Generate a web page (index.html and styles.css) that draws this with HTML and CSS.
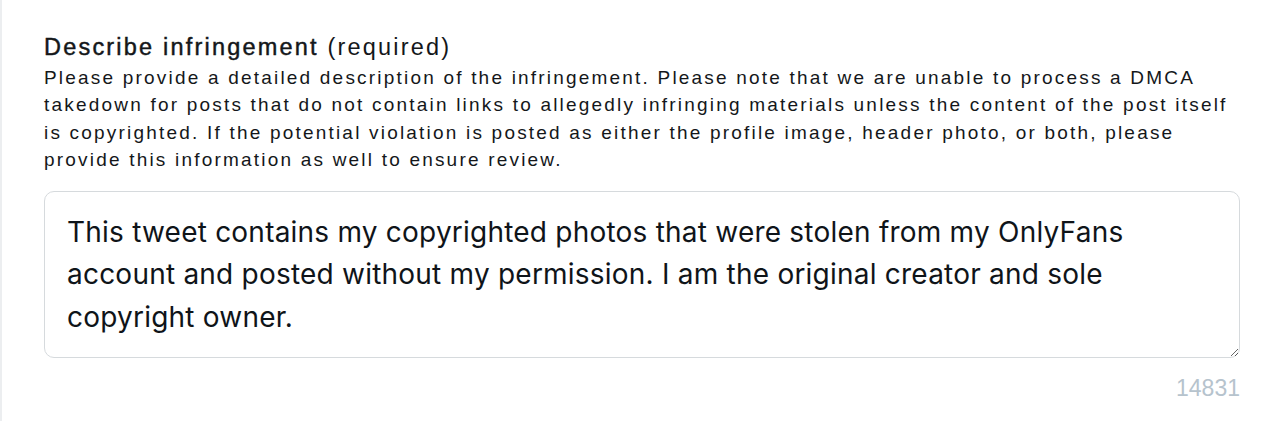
FILE: index.html
```html
<!DOCTYPE html>
<html lang="en">
<head>
<meta charset="utf-8">
<title>Describe infringement</title>
<link rel="stylesheet" href="styles.css">
</head>
<body>
<div class="page">
  <div class="field">
    <label class="field-label" for="desc"><span class="label-main">Describe infringement</span> (required)</label>
    <p class="field-help">Please provide a detailed description of the infringement. Please note that we are unable to process a DMCA takedown for posts that do not contain links to allegedly infringing materials unless the content of the post itself is copyrighted. If the potential violation is posted as either the profile image, header photo, or both, please provide this information as well to ensure review.</p>
    <textarea id="desc" class="field-input">This tweet contains my copyrighted photos that were stolen from my OnlyFans account and posted without my permission. I am the original creator and sole copyright owner.</textarea>
    <div class="field-counter">14831</div>
  </div>
</div>
</body>
</html>
```

FILE: styles.css
```css
html, body {
  margin: 0;
  padding: 0;
  background: #ffffff;
}

.page {
  min-height: 421px;
  box-sizing: border-box;
  border-left: 2px solid #eceef0;
  padding: 33px 40px 0 42px;
}

.field {
  display: flex;
  flex-direction: column;
}

.field-label {
  font-family: "Liberation Sans", Arial, sans-serif;
  font-size: 23.5px;
  line-height: 28px;
  color: #14171a;
  letter-spacing: 2.2px;
}

.label-main {
  -webkit-text-stroke: 0.45px #14171a;
}

.field-help {
  margin: 3px 0 0;
  font-family: "Liberation Sans", Arial, sans-serif;
  font-size: 19px;
  line-height: 27.4px;
  letter-spacing: 2.2px;
  color: #14171a;
  width: 1200px;
}

.field-input {
  margin-top: 17px;
  box-sizing: border-box;
  width: 1196px;
  height: 167px;
  padding: 19px 22px 17px;
  border: 1.5px solid #d6dadd;
  border-radius: 10px;
  font-family: Inter, "Open Sans", sans-serif;
  font-size: 28px;
  line-height: 42.5px;
  letter-spacing: 0.22px;
  color: #0f1419;
  background: #ffffff;
  resize: vertical;
  outline: none;
}

.field-counter {
  width: 1196px;
  margin-top: 16px;
  text-align: right;
  font-family: "Liberation Sans", Arial, sans-serif;
  font-size: 23px;
  line-height: 28px;
  color: #b6c3cd;
}
```
